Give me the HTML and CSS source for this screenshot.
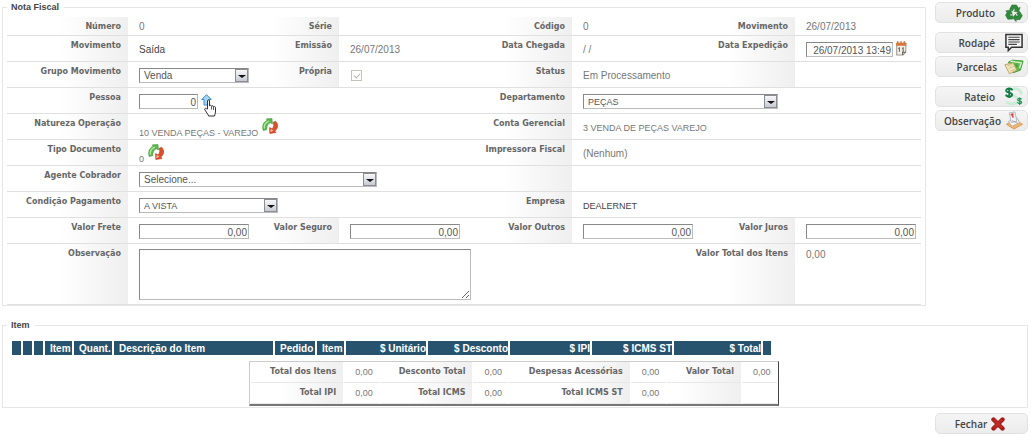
FILE: index.html
```html
<!DOCTYPE html>
<html lang="pt-BR">
<head>
<meta charset="utf-8">
<title>Nota Fiscal</title>
<link rel="stylesheet" href="styles.css">
</head>
<body>
<svg class="defs" aria-hidden="true">
  <symbol id="refresh" viewBox="0 0 16 16">
    <path d="M1.2 12.500C-.2 8 1.200 4 5 2.600L4.600.8 10 .6 10.400 6 8.600 4.800C5.600 5.600 4.600 8 4.900 11.600z" fill="#5cb84c" stroke="#3f9a3c" stroke-width=".6"/>
    <path d="M2.400 10.500C2 7 3.400 4.400 7 3.200" fill="none" stroke="#b5eaa2" stroke-width="1.300"/>
    <path d="M13.600 3.200C16.400 6 16.400 10.400 12.800 13l1.200 1.600-6.200.8L7.600 9.600l2.200 1.200c2.200-1.600 2.600-4 1.200-6.400z" fill="#dc4f2a" stroke="#b5331a" stroke-width=".6"/>
    <path d="M9 14l.2-2 1.800.6" fill="none" stroke="#f8b491" stroke-width="1.400"/>
  </symbol>
</svg>
<form>
  <div class="top">
    <fieldset class="invoice">
      <legend>Nota Fiscal</legend>
      <div class="row first">
        <span class="label">Número</span><span class="value">0</span>
        <span class="label">Série</span><span class="value"></span>
        <span class="label">Código</span><span class="value">0</span>
        <span class="label">Movimento</span><span class="value">26/07/2013</span>
      </div>
      <div class="row">
        <span class="label">Movimento</span><span class="value dark">Saída</span>
        <span class="label">Emissão</span><span class="value">26/07/2013</span>
        <span class="label">Data Chegada</span><span class="value">/ /</span>
        <label class="label" for="exp">Data Expedição</label>
        <span class="value"><input type="text" class="w-date" id="exp" value="26/07/2013 13:49">
          <svg class="calendar" viewBox="0 0 11 14"><path d="M1.500 2.500h8.500v7.500L7.500 13H1.500z" fill="#f2efe8" stroke="#9c9a94"/><path d="M1 1.500h9.500v3H1z" fill="#d9793b"/><path d="M2.500 0v2.500M5.500 0v2.500M8.500 0v2.500" stroke="#b0703c"/><path d="M3 7l1-.6V10M6.500 7l1-.6V10M7 13v-2.500h3" fill="none" stroke="#665"/></svg></span>
      </div>
      <div class="row">
        <label class="label" for="grupo">Grupo Movimento</label>
        <span class="value"><span class="select w-value"><select id="grupo"><option>Venda</option></select><i class="arrow"></i></span></span>
        <label class="label" for="propria">Própria</label><span class="value"><input type="checkbox" id="propria" checked disabled></span>
        <span class="label">Status</span><span class="value">Em Processamento</span>
        <span class="label"></span><span class="value"></span>
      </div>
      <div class="row">
        <label class="label" for="pessoa">Pessoa</label>
        <span class="value span-3"><input type="text" class="w-code" id="pessoa" value="0">
          <span class="lookup"><svg class="up" viewBox="0 0 11 12"><path d="M5.500.7l4.800 4.800H8v5.500H3V5.500H.7z" fill="#a5d5f5" stroke="#3f8ccb"/></svg>
          <svg class="hand" viewBox="0 0 13 18"><path d="M3.500 10V2c0-1.500 2-1.500 2 0v5c.3-1 2-1 2 .4.300-1 2-.8 2 .5.400-.8 2-.5 2 .8V13c0 1.500-1 2.500-1 4h-6c0-1.500-1.500-2.500-2.200-4L.7 10.500c-.3-1.200 1-1.500 1.600-.8z" fill="#fff" stroke="#333"/><path d="M7.500 7.500v3M9.500 8v3" stroke="#555"/></svg></span></span>
        <label class="label" for="depto">Departamento</label>
        <span class="value span-3"><span class="select w-dept"><select id="depto" class="caps"><option>PEÇAS</option></select><i class="arrow"></i></span></span>
      </div>
      <div class="row">
        <span class="label">Natureza Operação</span>
        <span class="value span-3 with-icon caps">10 VENDA PEÇAS - VAREJO <svg class="refresh"><use href="#refresh"/></svg></span>
        <span class="label">Conta Gerencial</span><span class="value span-3 caps">3 VENDA DE PEÇAS VAREJO</span>
      </div>
      <div class="row">
        <span class="label">Tipo Documento</span>
        <span class="value span-3 with-icon caps">0 <svg class="refresh"><use href="#refresh"/></svg></span>
        <span class="label">Impressora Fiscal</span><span class="value span-3">(Nenhum)</span>
      </div>
      <div class="row">
        <label class="label" for="agente">Agente Cobrador</label>
        <span class="value span-3"><span class="select w-agent"><select id="agente"><option>Selecione...</option></select><i class="arrow"></i></span></span>
        <span class="label"></span><span class="value span-3"></span>
      </div>
      <div class="row">
        <label class="label" for="cond">Condição Pagamento</label>
        <span class="value span-3"><span class="select w-terms"><select id="cond" class="caps"><option>A VISTA</option></select><i class="arrow"></i></span></span>
        <span class="label">Empresa</span><span class="value span-3 caps dark">DEALERNET</span>
      </div>
      <div class="row">
        <label class="label" for="frete">Valor Frete</label><span class="value"><input type="text" class="w-value" id="frete" value="0,00"></span>
        <label class="label" for="seguro">Valor Seguro</label><span class="value"><input type="text" class="w-value" id="seguro" value="0,00"></span>
        <label class="label" for="outros">Valor Outros</label><span class="value"><input type="text" class="w-value" id="outros" value="0,00"></span>
        <label class="label" for="juros">Valor Juros</label><span class="value"><input type="text" class="w-value" id="juros" value="0,00"></span>
      </div>
      <div class="row notes">
        <label class="label" for="obs">Observação</label><span class="value span-5"><textarea id="obs"></textarea></span>
        <span class="label">Valor Total dos Itens</span><span class="value">0,00</span>
      </div>
    </fieldset>
    <aside class="actions">
      <div class="group">
        <button type="button">Produto
          <svg viewBox="0 0 20 20"><g fill="#2f8a3a" stroke="#1f6a2a" stroke-width=".5"><path id="seg" d="M5.400 6.500L7.800 2h4.800l2.200 3.400 1.700-.9-1.700 5.100-5-.9 1.600-1-1.400-2.300L8.400 8.400z"/><use href="#seg" transform="rotate(120 10 10.800)"/><use href="#seg" transform="rotate(240 10 10.800)"/></g></svg></button>
      </div>
      <div class="group">
        <button type="button">Rodapé
          <svg viewBox="0 0 20 20"><path d="M1.500 1.500h17v13.500H7.500L4 18.500V15H1.500z" fill="#f4f4f4" stroke="#333" stroke-width="1.600"/><path d="M4 4.500h12M4 7h12M4 9.500h12M4 12h9" stroke="#444" stroke-width="1.200"/></svg></button>
        <button type="button">Parcelas
          <svg viewBox="0 0 22 20"><path d="M5 5l4-2 12 1-3 10-8 3z" fill="#5fbe4b" stroke="#3a9a35"/><path d="M7 4l12 2-2 6" fill="none" stroke="#d6f1c5" stroke-width="1.500"/><path d="M1 8l9-2 4 8-8 4z" fill="#f3e7ba" stroke="#b79d5c"/><path d="M4 9l5-1M5 12l6-2M7 15l5-2" stroke="#c5bd8c"/><path d="M13 7l2 4" stroke="#44a544" stroke-width="2"/></svg></button>
      </div>
      <div class="group">
        <button type="button">Rateio
          <svg viewBox="0 0 20 20"><path d="M7 3c6-3 12 1 10 5M16 12c-2 6-10 7-14 4M8 8l6 4" fill="none" stroke="#c9eed5" stroke-width="3"/><path d="M8.500 3.500C6-.2.800 2 2 4.500c1 1.800 6 1 6 3.500C8 11 2.500 11 1.500 8M5 .5v11" fill="none" stroke="#147a45" stroke-width="2"/><path d="M18 13c-1.500-2-4.500-.8-4 .7.600 1.200 4 .8 4 2.300 0 2-3.500 2-4.500 0M16 11v8" fill="none" stroke="#22945a" stroke-width="1.300"/></svg></button>
        <button type="button">Observação
          <svg viewBox="0 0 20 20"><path d="M2 14l9-5 8 5-9 5z" fill="#efb36b" stroke="#dd9b55"/><path d="M4 11l9-4 3 5-8 4z" fill="#f6f4ef" stroke="#b9b6b0"/><path d="M5 2l6-1 2 10-6 1z" fill="#eff3fa" stroke="#adb7c8"/><path d="M6.500 4l3-1M8 3l1 4" stroke="#dc4b39" stroke-width="1.800"/><path d="M8 10l6 3" stroke="#867" stroke-opacity=".5"/></svg></button>
      </div>
    </aside>
  </div>

  <fieldset class="items">
    <legend>Item</legend>
    <table class="item-table">
      <colgroup><col class="c-icon"><col class="c-icon"><col class="c-icon"><col class="c-item"><col class="c-qty"><col class="c-desc"><col class="c-order"><col class="c-item"><col class="c-money"><col class="c-money"><col class="c-money"><col class="c-money"><col class="c-total"><col class="c-end"></colgroup>
      <thead><tr><th></th><th></th><th></th><th>Item</th><th>Quant.</th><th>Descrição do Item</th><th>Pedido</th><th>Item</th><th class="num">$ Unitário</th><th class="num">$ Desconto</th><th class="num">$ IPI</th><th class="num">$ ICMS ST</th><th class="num">$ Total</th><th></th></tr></thead>
    </table>
    <table class="totals">
      <colgroup><col class="t-1"><col class="t-v"><col class="t-1"><col class="t-v"><col class="t-3"><col class="t-v"><col class="t-4"><col class="t-v"></colgroup>
      <tbody>
      <tr><th>Total dos Itens</th><td>0,00</td><th>Desconto Total</th><td>0,00</td><th>Despesas Acessórias</th><td>0,00</td><th>Valor Total</th><td>0,00</td></tr>
      <tr><th>Total IPI</th><td>0,00</td><th>Total ICMS</th><td>0,00</td><th>Total ICMS ST</th><td>0,00</td><th></th><td></td></tr>
      </tbody>
    </table>
  </fieldset>

  <div class="footer actions">
    <button type="button">Fechar
      <svg class="close" viewBox="0 0 14 14"><path d="M2.500 2.500l9 9M11.500 2.500l-9 9" stroke="#a51d1a" stroke-width="4.400" stroke-linecap="round"/><path d="M3 2.500l8 8.500M11 2.500L3 11" stroke="#bd2c26" stroke-width="2"/></svg></button>
  </div>
</form>
</body>
</html>
```
FILE: styles.css
```css
* { box-sizing: border-box; }
body {
  margin: 0;
  padding: 1px 3px 0 2px;
  background: #fff;
  color: #777;
  font: 10px/12px "Liberation Sans", Arial, sans-serif;
}
.defs { position: absolute; width: 0; height: 0; }
.top { display: flex; align-items: flex-start; gap: 9px; }
fieldset { margin: 0; min-width: 0; border: 1px solid #e6e6e6; }
legend {
  margin-left: 4px;
  padding: 0 5px 0 4px;
  color: #444;
  font-size: 9px;
  font-weight: bold;
}
.invoice { flex: 1; padding: 4px 4px 0; }
.invoice legend { margin-left: 0; }

.row {
  display: grid;
  grid-template-columns: 121fr 137fr 74fr 141fr 92fr 121fr 102fr 126fr;
  min-height: 26px;
  border-bottom: 1px solid #e0e0e0;
}
.row > * { min-width: 0; }
.row.first { min-height: 19px; }
.label {
  padding: 4px 7px 0 0;
  background: linear-gradient(to right, #fff, #efefef) right / 68px 100% no-repeat;
  color: #666;
  font: bold 8px/12px "DejaVu Sans", Verdana, sans-serif;
  text-align: right;
  white-space: nowrap;
}
.value {
  display: flex;
  align-items: center;
  gap: 2px;
  padding: 2px 0 0 11px;
  white-space: nowrap;
}
.span-3 { grid-column: span 3; }
.span-5 { grid-column: span 5; }
.dark { color: #444; }
.caps { font-size: 9px; }
.with-icon { align-items: flex-end; gap: 4px; }
.notes { min-height: 61px; }
.notes .value { align-items: flex-start; padding-top: 5px; }

input[type="text"], select, textarea {
  margin: 0;
  border: 1px solid #bbb;
  border-top-color: #888;
  border-left-color: #888;
  border-radius: 0;
  background: #fff;
  color: #555;
  font-family: inherit;
  font-size: 10px;
}
input[type="text"] { height: 15px; padding: 1px 1px 0 0; text-align: right; }
textarea { width: 332px; height: 51px; }
.w-date { width: 87px; }
.w-code { width: 59px; }
.w-value { width: 110px; }
.w-dept { width: 195px; }
.w-agent { width: 238px; }
.w-terms { width: 139px; }
.select { position: relative; display: block; height: 15px; }
select {
  appearance: none;
  display: block;
  width: 100%;
  height: 100%;
  padding: 0 14px 0 4px;
}
select.caps { font-size: 9px; }
.arrow {
  position: absolute;
  top: 1px;
  right: 1px;
  width: 13px;
  height: 13px;
  border: 1px solid #8c8c94;
  background: linear-gradient(#f8f8fb, #c9c9d4);
  pointer-events: none;
}
.arrow::after {
  content: "";
  position: absolute;
  top: 5px;
  left: 2px;
  border: 4px solid transparent;
  border-width: 3px 4px 0;
  border-top-color: #111;
}
input[type="checkbox"] {
  appearance: none;
  position: relative;
  width: 11px;
  height: 11px;
  margin: 0 0 0 1px;
  border: 1px solid #c3c3b8;
}
input[type="checkbox"]:checked::after {
  content: "";
  position: absolute;
  top: 1px;
  left: 3px;
  width: 3px;
  height: 5px;
  border: solid #b1b1a2;
  border-width: 0 1px 1px 0;
  transform: rotate(42deg);
}
.calendar { flex: none; width: 12px; height: 15px; margin-bottom: 3px; }
.refresh { width: 16px; height: 16px; margin-bottom: 5px; }
.lookup { position: relative; height: 16px; margin-left: 1px; }
.up { display: block; width: 11px; height: 12px; }
.hand { position: absolute; top: 5px; left: 3px; width: 13px; height: 18px; }

.actions { width: 93px; }
aside.actions { display: flex; flex-direction: column; gap: 9px; padding-top: 1px; }
.group { display: flex; flex-direction: column; gap: 3px; }
.actions button {
  display: flex;
  align-items: center;
  justify-content: flex-end;
  gap: 4px;
  width: 100%;
  height: 21px;
  padding: 0 3px 0 0;
  border: 1px solid #e2e2e2;
  border-radius: 5px;
  background: linear-gradient(#f5f5f5, #ececec);
  color: #444;
  font: 600 10px/12px "Open Sans", "Noto Sans", sans-serif;
}
.group button { gap: 9px; }
.group button svg { width: 20px; height: 19px; }
.group button:nth-child(2) { gap: 7px; }
.group:last-child button:nth-child(2) { gap: 3px; }
.footer { margin: 5px 0 0 auto; }
.footer.actions button { justify-content: center; }
.footer .close { width: 14px; height: 14px; }

.items { margin-top: 13px; padding: 10px 4px 1px 9px; }
.items legend { margin-left: -5px; }
table { table-layout: fixed; border-collapse: separate; }
.item-table { width: 75%; border-spacing: 0; }
.item-table th {
  height: 14px;
  padding: 1px 0 0 5px;
  border-right: 2px solid #fff;
  background: #27536f;
  color: #fff;
  font: bold 10px/12px "Liberation Sans", Arial, sans-serif;
  text-align: left;
  white-space: nowrap;
}
.item-table th:last-child { border-right: 0; }
.item-table .num { text-align: right; }
.item-table th:empty { padding: 0; }
.c-icon { width: 11px; }
.c-item { width: 29px; }
.c-qty { width: 40px; }
.c-desc { width: 161px; }
.c-order { width: 42px; }
.c-money { width: 82px; }
.c-total { width: 89px; }
.c-end { width: 8px; }

.totals {
  width: 530px;
  margin: 6px 0 0 237px;
  border: 1px solid #ccc;
  border-right: 1px solid #444;
  border-bottom: 2px solid #777;
  border-spacing: 1px 0;
}
.totals th, .totals td { height: 21px; padding: 0; border-bottom: 1px solid #e8e8e8; white-space: nowrap; }
.totals th {
  padding-right: 7px;
  background: linear-gradient(to right, #fff, #efefef) right / 64px 100% no-repeat;
  color: #666;
  font: bold 8px/12px "DejaVu Sans", Verdana, sans-serif;
  text-align: right;
}
.totals td { padding-left: 11px; font-size: 9px; }
.t-1 { width: 92px; }
.t-v { width: 35px; }
.t-3 { width: 120px; }
.t-4 { width: 74px; }
```
